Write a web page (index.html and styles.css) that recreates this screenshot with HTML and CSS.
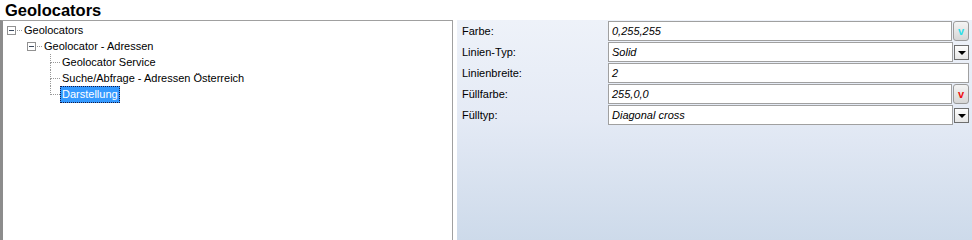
FILE: index.html
```html
<!DOCTYPE html>
<html lang="de">
<head>
    <meta charset="UTF-8">
    <title>Geolocators</title>
    <link rel="stylesheet" href="styles.css">
</head>
<body>
    <div class="title">Geolocators</div>
    <div class="main">
        <div class="tree">
            <div class="node lvl1">
                <span class="expander"></span><span class="hline"></span>
                <span class="label">Geolocators</span>
            </div>
            <div class="node lvl2">
                <span class="expander"></span><span class="hline"></span>
                <span class="label">Geolocator - Adressen</span>
            </div>
            <div class="node lvl3">
                <span class="elbow"><i></i><i></i></span>
                <span class="label">Geolocator Service</span>
            </div>
            <div class="node lvl3">
                <span class="elbow"><i></i><i></i></span>
                <span class="label">Suche/Abfrage - Adressen Österreich</span>
            </div>
            <div class="node lvl3 last">
                <span class="elbow"><i></i><i></i></span>
                <span class="label selected">Darstellung</span>
            </div>
        </div>
        <div class="props">
            <div class="row">
                <span class="name">Farbe:</span>
                <span class="value">0,255,255</span>
                <span class="color-btn cyan">v</span>
            </div>
            <div class="row">
                <span class="name">Linien-Typ:</span>
                <span class="value">Solid</span>
                <span class="drop-btn"></span>
            </div>
            <div class="row">
                <span class="name">Linienbreite:</span>
                <span class="value">2</span>
            </div>
            <div class="row">
                <span class="name">Füllfarbe:</span>
                <span class="value">255,0,0</span>
                <span class="color-btn red">v</span>
            </div>
            <div class="row">
                <span class="name">Fülltyp:</span>
                <span class="value">Diagonal cross</span>
                <span class="drop-btn"></span>
            </div>
        </div>
    </div>
</body>
</html>
```

FILE: styles.css
```css
body {
    margin: 0;
    font-family: "Liberation Sans", Arial, sans-serif;
    font-size: 11px;
    color: #000;
    background: #fff;
    height: 240px;
    overflow: hidden;
}

.title {
    height: 20px;
    line-height: 20px;
    padding-left: 5px;
    font-size: 16.5px;
    font-weight: bold;
}

.main {
    display: flex;
    height: 220px;
}

.tree {
    width: 449px;
    border-left: 3px solid #8c8c8c;
    border-top: 1px solid #a0a0a0;
    border-right: 1px solid #a0a0a0;
    padding-top: 1px;
    background: #fff;
}

.node {
    display: flex;
    align-items: center;
    height: 16px;
}

.lvl1 { padding-left: 4px; }
.lvl2 { padding-left: 24px; }
.lvl3 { padding-left: 45px; }

.expander {
    width: 7px;
    height: 7px;
    border: 1px solid #919191;
    position: relative;
    background: #fff;
}

.expander::after {
    content: "";
    position: absolute;
    left: 1px;
    top: 3px;
    width: 5px;
    height: 1px;
    background: #3c4a5e;
}

.hline {
    width: 5px;
    border-top: 1px dotted #999;
    margin-left: 1px;
}

.label {
    padding: 0 1px;
    line-height: 15px;
    border: 1px solid transparent;
}

.elbow {
    display: flex;
    flex-direction: column;
    width: 10px;
    height: 16px;
    margin-left: 2px;
}

.elbow i {
    flex: 1;
    border-left: 1px dotted #999;
}

.elbow i:first-child {
    border-bottom: 1px dotted #999;
}

.last .elbow i:last-child {
    border-left: none;
}

.selected {
    background: #3399ff;
    color: #fff;
    border: 1px dotted #1a1a40;
}

.props {
    flex: 1;
    margin-left: 4px;
    padding: 1px 3px 0 5px;
    background: linear-gradient(#eef2f9 0%, #e4eaf5 45%, #cddaea 100%);
}

.row {
    display: flex;
    align-items: center;
    height: 20px;
    margin-bottom: 1px;
}

.name {
    width: 146px;
}

.value {
    flex: 1;
    height: 18px;
    line-height: 18px;
    border: 1px solid #a0a0a0;
    background: #fff;
    padding-left: 3px;
    font-style: italic;
}

.color-btn {
    width: 14px;
    height: 18px;
    margin-left: 1px;
    border: 1px solid #9a9a9a;
    border-radius: 3px;
    background: linear-gradient(#f4f4f4, #d6d6d6);
    font-weight: bold;
    font-size: 11px;
    text-align: center;
    line-height: 18px;
}

.cyan { color: #2adfe8; }
.red { color: #ee1010; }

.drop-btn {
    width: 13px;
    height: 13px;
    margin-left: 1px;
    border: 1px solid #6e6e6e;
    background: linear-gradient(#fdfdfd, #e6e6e6);
    position: relative;
}

.drop-btn::after {
    content: "";
    position: absolute;
    left: 3px;
    top: 5px;
    border-left: 4px solid transparent;
    border-right: 4px solid transparent;
    border-top: 4px solid #000;
}
```
